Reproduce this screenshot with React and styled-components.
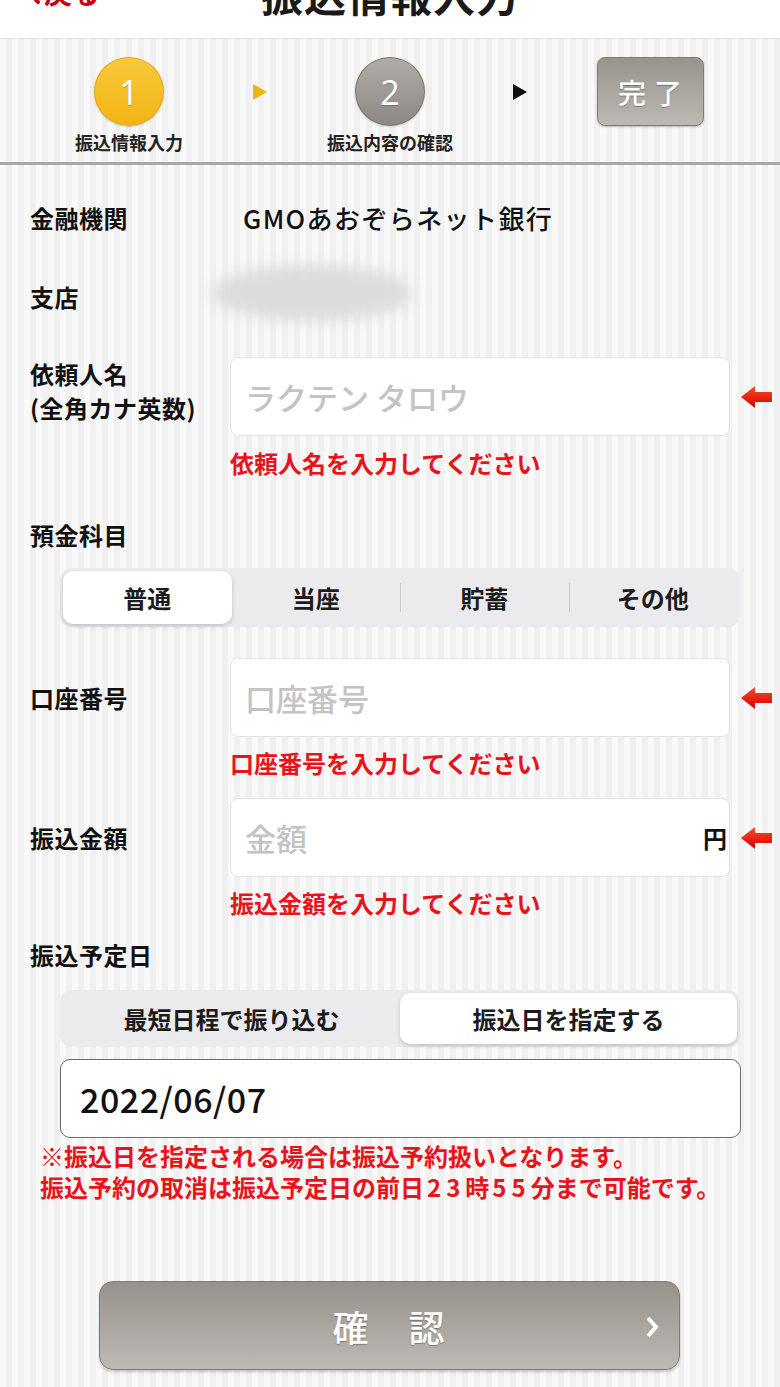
import React from 'react';
import styled, { createGlobalStyle } from 'styled-components';

const GlobalStyle = createGlobalStyle`
  * { box-sizing: border-box; }
  body {
    margin: 0;
    font-family: "Noto Sans CJK JP", "Noto Sans", sans-serif;
    color: #111;
  }
`;

const Page = styled.div`
  width: 780px;
  min-height: 1387px;
  background: repeating-linear-gradient(90deg, #f9f9f9 0 6px, #f0f0f0 6px 12px);
  overflow: hidden;
`;

const TopBar = styled.header`
  position: relative;
  height: 39px;
  background: #fff;
  border-bottom: 1px solid #dedede;
  overflow: hidden;
  display: flex;
  justify-content: center;
`;

const BackLink = styled.a`
  position: absolute;
  left: 26px;
  top: -22px;
  display: flex;
  align-items: center;
  gap: 4px;
  color: #c8000f;
  font-size: 28px;
  font-weight: 700;
  line-height: 28px;
`;

const Title = styled.h1`
  margin: -26px 0 0;
  font-size: 42px;
  line-height: 40px;
  font-weight: 700;
  letter-spacing: 1px;
  color: #1a1a1a;
`;

const Stepper = styled.nav`
  display: grid;
  grid-template-columns: 160px 101px 160px 100px 160px;
  padding: 18px 0 0 49px;
  height: 126px;
  border-bottom: 3px solid #a8a8a8;
`;

const Step = styled.div`
  display: flex;
  flex-direction: column;
  align-items: center;
`;

const StepCircle = styled.div`
  width: 70px;
  height: 69px;
  border-radius: 50%;
  display: flex;
  align-items: center;
  justify-content: center;
  color: #fff;
  font-family: "Noto Sans", sans-serif;
  font-size: 34px;
  text-shadow: 0 1px 1px rgba(0, 0, 0, 0.25);
  background: ${p => p.$tone === 'active'
    ? 'linear-gradient(#f9c93a, #f2b414)'
    : 'linear-gradient(#b0aca7, #8d8883)'};
  border: 1px solid ${p => p.$tone === 'active' ? '#e4a70f' : '#77726d'};
  box-shadow: 0 1px 2px rgba(0, 0, 0, 0.2);
`;

const StepLabel = styled.span`
  margin-top: 4px;
  font-size: 18px;
  line-height: 24px;
  font-weight: 700;
  color: #222;
`;

const StepArrow = styled.div`
  display: flex;
  align-items: flex-start;
  justify-content: center;
  padding-top: 27px;
  &::before {
    content: '';
    width: 0;
    height: 0;
    border-left: 14px solid ${p => p.$color};
    border-top: 8px solid transparent;
    border-bottom: 8px solid transparent;
  }
`;

const DoneBox = styled.div`
  width: 107px;
  height: 69px;
  border-radius: 8px;
  border: 1px solid #817c77;
  background: linear-gradient(#98938d, #bcb8b2);
  box-shadow: 0 1px 2px rgba(0, 0, 0, 0.25);
  display: flex;
  align-items: center;
  justify-content: center;
  color: #fff;
  font-size: 28px;
  font-weight: 500;
  letter-spacing: 8px;
  padding-left: 8px;
  text-shadow: 0 1px 1px rgba(0, 0, 0, 0.3);
`;

const Form = styled.main`
  padding: 0 0 0 30px;
`;

const FieldRow = styled.div`
  display: grid;
  grid-template-columns: 200px 500px 50px;
  align-items: ${p => p.$align || 'center'};
  margin-top: ${p => p.$gap}px;
`;

const Label = styled.div`
  font-size: 24px;
  line-height: 34px;
  font-weight: 700;
  letter-spacing: 0.5px;
  color: #111;
  white-space: nowrap;
  margin-top: ${p => p.$offset || 0}px;
`;

const Value = styled.div`
  padding-left: 13px;
  font-size: 26px;
  line-height: 34px;
  font-weight: 500;
  letter-spacing: 1.4px;
  white-space: nowrap;
`;

const Blur = styled.div`
  width: 200px;
  height: 56px;
  margin: 6px 0 0 -18px;
  border-radius: 50%;
  background: #dcdcdc;
  filter: blur(7px);
`;

const InputBox = styled.div`
  height: 79px;
  background: #fff;
  border: 1px solid #e4e4e4;
  border-radius: 8px;
  display: flex;
  align-items: center;
  justify-content: space-between;
  padding: 0 2px 0 14px;
`;

const Placeholder = styled.span`
  font-size: 31px;
  font-weight: 500;
  color: #c3c3c6;
`;

const Suffix = styled.span`
  font-size: 24px;
  font-weight: 700;
`;

const ArrowMark = styled.svg`
  display: block;
  margin-left: 4px;
`;

const ArrowCell = styled.div`
  justify-self: center;
  align-self: center;
`;

const ErrorText = styled.p`
  margin: ${p => p.$gap}px 0 0 200px;
  font-size: 24px;
  line-height: 30px;
  font-weight: 700;
  color: #e8141c;
`;

const SectionLabel = styled(Label)`
  margin-top: ${p => p.$gap}px;
`;

const Segmented = styled.div`
  display: flex;
  width: 680px;
  height: ${p => p.$height}px;
  margin: ${p => p.$gap}px 0 0 30px;
  padding: 3px;
  border-radius: 12px;
  background: #ebebee;
`;

const Segment = styled.div`
  position: relative;
  flex: 1;
  display: flex;
  align-items: center;
  justify-content: center;
  font-size: 24px;
  font-weight: 700;
  color: #1c1c1c;
  border-radius: 10px;
  background: ${p => p.$active ? '#fff' : 'transparent'};
  box-shadow: ${p => p.$active ? '0 2px 4px rgba(0, 0, 0, 0.18)' : 'none'};
  &::before {
    content: '';
    display: ${p => p.$divider ? 'block' : 'none'};
    position: absolute;
    left: 0;
    top: 12px;
    bottom: 12px;
    width: 1px;
    background: #c9c9cc;
  }
`;

const DateBox = styled.div`
  width: 681px;
  height: 79px;
  margin: 12px 0 0 30px;
  padding-left: 19px;
  display: flex;
  align-items: center;
  background: #fff;
  border: 1px solid #6a6a6a;
  border-radius: 10px;
  font-size: 34px;
  font-weight: 500;
  letter-spacing: 0.5px;
`;

const Note = styled.p`
  margin: 2px 0 0 10px;
  font-size: 24px;
  line-height: 31px;
  font-weight: 700;
  color: #e8141c;
  white-space: nowrap;
`;

const Digits = styled.span`
  letter-spacing: 5px;
  padding-left: 3px;
`;

const ConfirmButton = styled.button`
  position: relative;
  display: flex;
  align-items: center;
  justify-content: center;
  width: 581px;
  height: 89px;
  margin: 79px 0 0 69px;
  border: 1px solid #7f7a75;
  border-radius: 14px;
  background: linear-gradient(#97918b, #bdb9b4);
  box-shadow: 0 2px 3px rgba(0, 0, 0, 0.2);
  color: #fff;
  font-family: "Noto Sans CJK JP", sans-serif;
  font-size: 36px;
  font-weight: 500;
  letter-spacing: 2px;
  text-shadow: 0 1px 1px rgba(0, 0, 0, 0.3);
`;

const Chevron = styled.svg`
  position: absolute;
  right: 20px;
  top: 34px;
`;

function RequiredArrow() {
  return (
    <ArrowCell>
      <ArrowMark width="32" height="24" viewBox="0 0 32 24">
        <defs>
          <linearGradient id="arr" x1="0" y1="0" x2="0" y2="1">
            <stop offset="0" stopColor="#ff4a26" />
            <stop offset="1" stopColor="#d40000" />
          </linearGradient>
        </defs>
        <polygon points="0,12 14,1 14,7 31,7 31,17 14,17 14,23" fill="url(#arr)" />
      </ArrowMark>
    </ArrowCell>
  );
}

export default function App() {
  return (
    <Page>
      <GlobalStyle />
      <TopBar>
        <BackLink>
          <svg width="14" height="24" viewBox="0 0 14 24">
            <path d="M12 2 L3 12 L12 22" stroke="#c8000f" strokeWidth="4" fill="none" strokeLinecap="round" />
          </svg>
          戻る
        </BackLink>
        <Title>振込情報入力</Title>
      </TopBar>

      <Stepper>
        <Step>
          <StepCircle $tone="active">1</StepCircle>
          <StepLabel>振込情報入力</StepLabel>
        </Step>
        <StepArrow $color="#f2b414" />
        <Step>
          <StepCircle>2</StepCircle>
          <StepLabel>振込内容の確認</StepLabel>
        </Step>
        <StepArrow $color="#111" />
        <Step>
          <DoneBox>完了</DoneBox>
        </Step>
      </Stepper>

      <Form>
        <FieldRow $gap={36}>
          <Label>金融機関</Label>
          <Value>GMOあおぞらネット銀行</Value>
        </FieldRow>

        <FieldRow $gap={24}>
          <Label $offset={14}>支店</Label>
          <Blur />
        </FieldRow>

        <FieldRow $gap={36} $align="start">
          <Label>依頼人名<br />(全角カナ英数)</Label>
          <InputBox>
            <Placeholder>ラクテン タロウ</Placeholder>
          </InputBox>
          <RequiredArrow />
        </FieldRow>
        <ErrorText $gap={12}>依頼人名を入力してください</ErrorText>

        <SectionLabel $gap={40}>預金科目</SectionLabel>
        <Segmented $gap={16} $height={59}>
          <Segment $active>普通</Segment>
          <Segment>当座</Segment>
          <Segment $divider>貯蓄</Segment>
          <Segment $divider>その他</Segment>
        </Segmented>

        <FieldRow $gap={31}>
          <Label>口座番号</Label>
          <InputBox>
            <Placeholder>口座番号</Placeholder>
          </InputBox>
          <RequiredArrow />
        </FieldRow>
        <ErrorText $gap={11}>口座番号を入力してください</ErrorText>

        <FieldRow $gap={20}>
          <Label>振込金額</Label>
          <InputBox>
            <Placeholder>金額</Placeholder>
            <Suffix>円</Suffix>
          </InputBox>
          <RequiredArrow />
        </FieldRow>
        <ErrorText $gap={11}>振込金額を入力してください</ErrorText>

        <SectionLabel $gap={20}>振込予定日</SectionLabel>
        <Segmented $gap={18} $height={57}>
          <Segment>最短日程で振り込む</Segment>
          <Segment $active>振込日を指定する</Segment>
        </Segmented>
        <DateBox>2022/06/07</DateBox>
        <Note>
          ※振込日を指定される場合は振込予約扱いとなります。<br />
          振込予約の取消は振込予定日の前日<Digits>23</Digits>時<Digits>55</Digits>分まで可能です。
        </Note>

        <ConfirmButton type="button">
          確　認
          <Chevron width="14" height="22" viewBox="0 0 14 22">
            <path d="M3 2 L11 11 L3 20" stroke="#fff" strokeWidth="4" fill="none" />
          </Chevron>
        </ConfirmButton>
      </Form>
    </Page>
  );
}
